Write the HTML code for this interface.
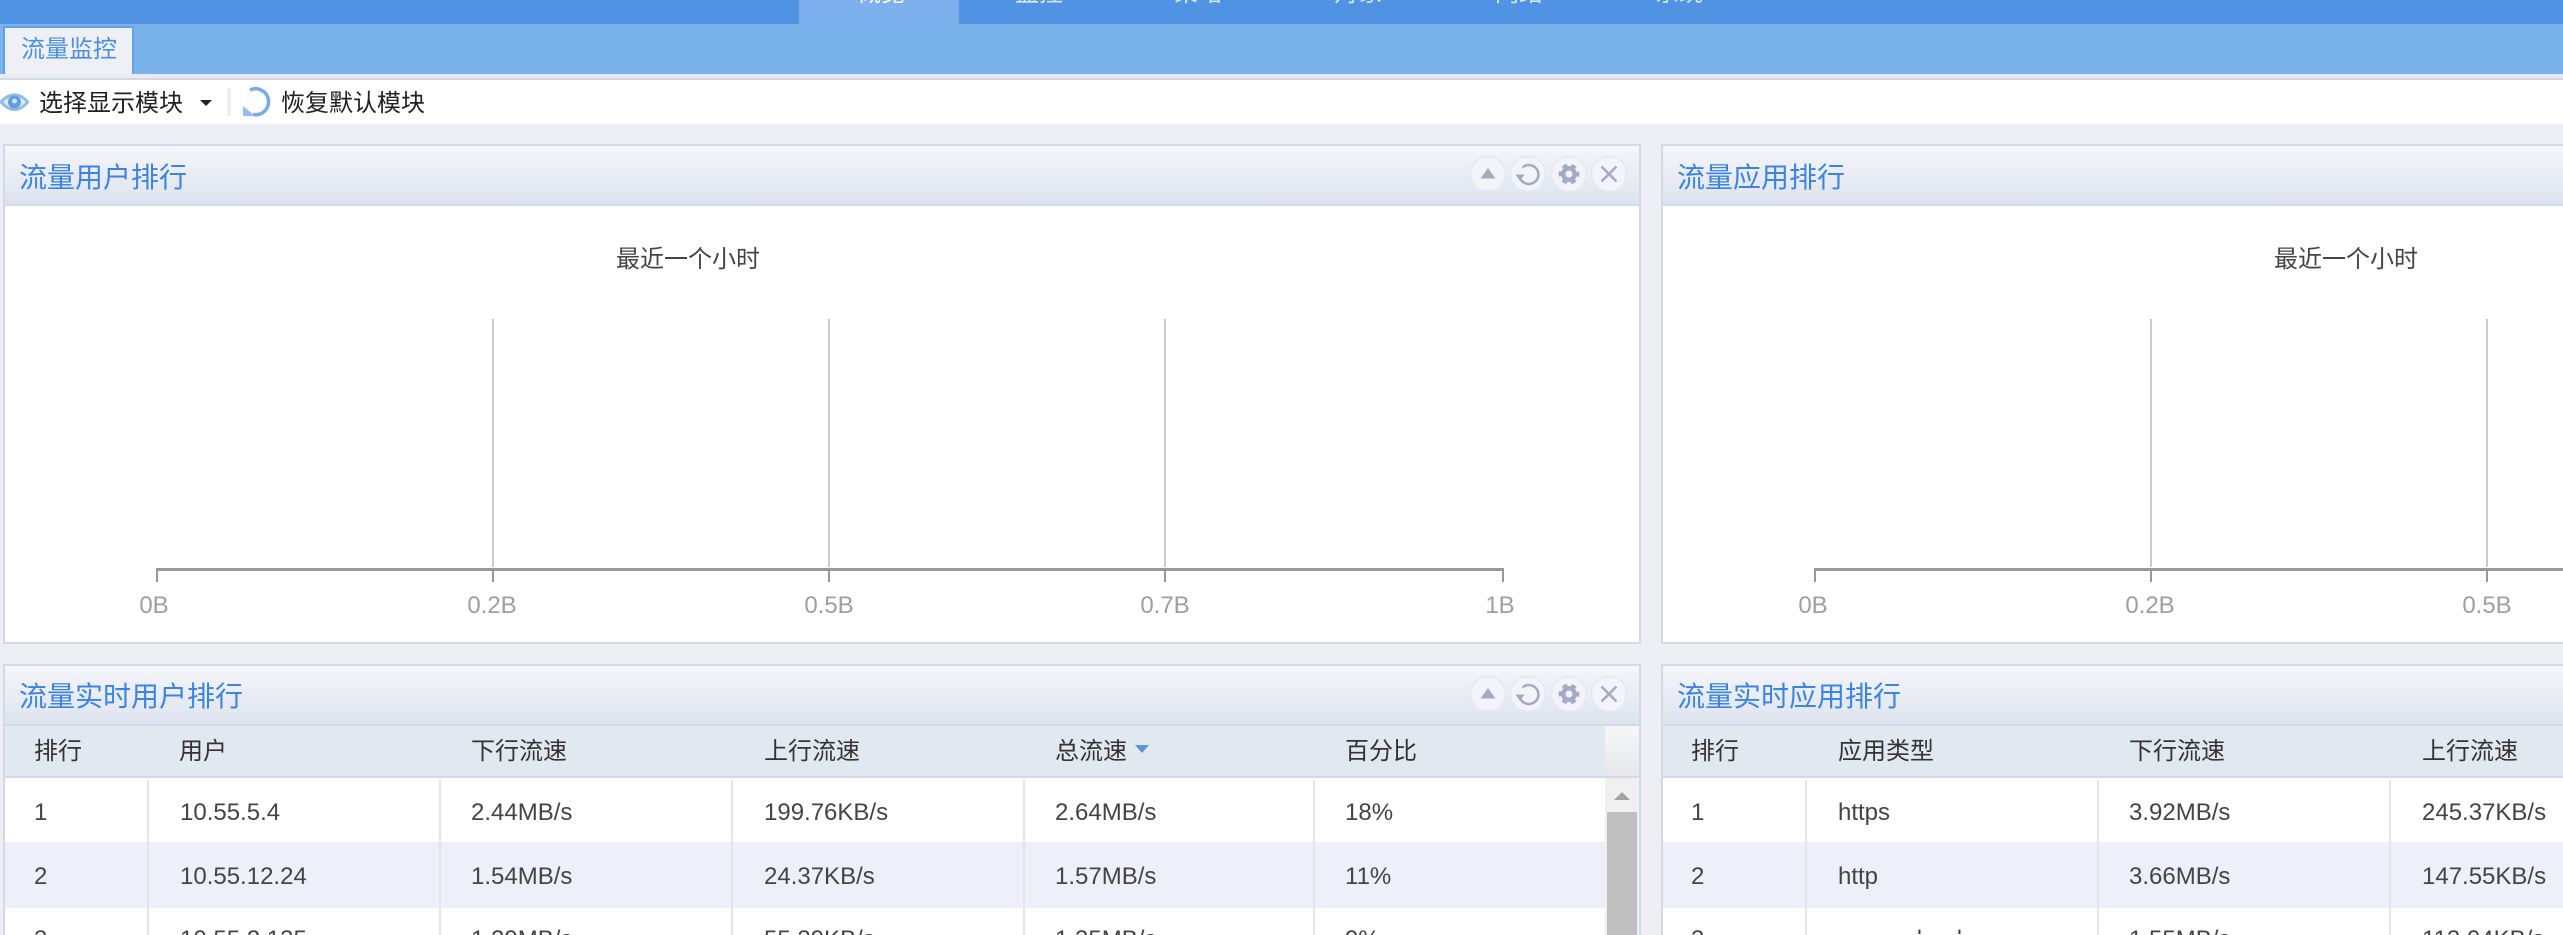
<!DOCTYPE html>
<html lang="zh">
<head>
<meta charset="utf-8">
<title>流量监控</title>
<style>
html,body{margin:0;padding:0;background:#edeff4;width:2563px;height:935px;overflow:hidden;}
#wrap{position:relative;width:2563px;height:935px;overflow:hidden;font-family:"Liberation Sans","Noto Sans CJK SC",sans-serif;font-size:24px;color:#333;background:#edeff4;}
.a{position:absolute;}
.t{position:absolute;line-height:32px;height:32px;white-space:nowrap;}
.c{transform:translateX(-50%);}
.nav{color:#d6e5f8;top:-22px;}
.title{color:#3c84e2;font-size:28px;}
.hd{height:62px;top:0;background:linear-gradient(#f5f6fa 0,#eceef5 40%,#dde3ee 100%);}
.panel{position:absolute;box-sizing:border-box;border:2px solid #d3d9ea;background:#fff;}
.sep{position:absolute;width:2px;background:#e4e5e8;}
.grid{position:absolute;width:2px;top:319px;height:248px;background:#ccc;}
.tick{position:absolute;width:2px;top:569px;height:13px;background:#999;}
.lbl{position:absolute;top:590px;line-height:32px;color:#a09e9c;transform:translateX(-50%);white-space:nowrap;}
.r{color:#444;}
</style>
</head>
<body>
<div id="wrap">
<!-- top nav -->
<div class="a" style="left:0;top:0;width:2563px;height:24px;background:#4f93e2;"></div>
<div class="a" style="left:799px;top:0;width:160px;height:24px;background:#7db0ec;"></div>
<div class="t nav c" style="left:881px;color:#fff;">概览</div>
<div class="t nav c" style="left:1039px;">监控</div>
<div class="t nav c" style="left:1198px;">策略</div>
<div class="t nav c" style="left:1358px;">对象</div>
<div class="t nav c" style="left:1519px;">网络</div>
<div class="t nav c" style="left:1679px;">系统</div>

<!-- sub bar -->
<div class="a" style="left:0;top:24px;width:2563px;height:50px;background:#7ab3eb;"></div>
<div class="a" style="left:3px;top:26px;width:131px;height:48px;box-sizing:border-box;background:#eef0f6;border:2px solid #5fa2e8;border-bottom:none;"></div>
<div class="t" style="left:21px;top:34px;color:#4a8fe2;">流量监控</div>

<!-- toolbar -->
<div class="a" style="left:0;top:74px;width:2563px;height:4px;background:#ebecf3;"></div>
<div class="a" style="left:0;top:78px;width:2563px;height:2px;background:#d3d8e8;"></div>
<div class="a" style="left:0;top:80px;width:2563px;height:44px;background:#fff;"></div>
<svg class="a" style="left:0;top:90px;" width="32" height="24" viewBox="0 0 32 24">
<path d="M-1 12C5 5 10 3.500 14.500 3.500S24 5 29.500 12C24 19 19 21 14.500 21S5 19-1 12Z" fill="#8fbce9"/>
<path d="M3 12C7 8 10 7 14.500 7S22 8 26 12C22 16 19 18 14.500 18S7 16 3 12Z" fill="#dcebf9"/>
<circle cx="14.500" cy="12" r="6.500" fill="#5f9fe0"/>
<circle cx="14.500" cy="11" r="2.500" fill="#cfe3f7"/>
</svg>
<div class="t" style="left:39px;top:88px;color:#222;">选择显示模块</div>
<div class="a" style="left:200px;top:100px;width:0;height:0;border-left:6px solid transparent;border-right:6px solid transparent;border-top:6px solid #222;"></div>
<div class="a" style="left:227px;top:88px;width:4px;height:28px;background:#eeeeee;"></div>
<svg class="a" style="left:242px;top:86px;" width="30" height="31" viewBox="0 0 30 31">
<path d="M8 4A13 13 0 1 1 11 28.500" fill="none" stroke="#72ade6" stroke-width="3.500"/>
<path d="M1 20V30H13Z" fill="#8fbfec"/>
</svg>
<div class="t" style="left:281px;top:88px;color:#222;">恢复默认模块</div>

<!-- panel 1 -->
<div class="panel" style="left:3px;top:144px;width:1638px;height:500px;"></div>
<div class="a hd" style="left:5px;top:146px;width:1634px;height:58px;border-bottom:2px solid #d3d9ea;"></div>
<div class="t title" style="left:19px;top:162px;">流量用户排行</div>
<svg class="a" style="left:1468px;top:154px;" width="164" height="40" viewBox="0 0 164 40">
<g fill="#f3f4f9" stroke="#e5e8f0" stroke-width="1.500">
<circle cx="20" cy="20" r="17.500"/><circle cx="60" cy="20" r="17.500"/><circle cx="101" cy="20" r="17.500"/><circle cx="141" cy="20" r="17.500"/>
</g>
<path d="M12.500 24.500L20 14L27.500 24.500Z" fill="#a3aac6"/>
<path d="M54.500 13.500A9.500 9.500 0 1 1 51.500 22" fill="none" stroke="#a3aac6" stroke-width="2.500"/>
<path d="M47.500 20.500H56.500L52 27Z" fill="#a3aac6"/>
<circle cx="101" cy="20" r="8" fill="#a3aac6"/>
<circle cx="101" cy="20" r="9" fill="none" stroke="#a3aac6" stroke-width="2.800" stroke-dasharray="5 4.425" stroke-dashoffset="2.500"/>
<circle cx="101" cy="20" r="3.500" fill="#f3f4f9"/>
<path d="M133.500 12.500L148.500 27.500M148.500 12.500L133.500 27.500" fill="none" stroke="#a3aac6" stroke-width="2.500"/>
</svg>
<div class="t c" style="left:688px;top:244px;color:#444;">最近一个小时</div>
<div class="grid" style="left:492px;"></div>
<div class="grid" style="left:828px;"></div>
<div class="grid" style="left:1164px;"></div>
<div class="a" style="left:156px;top:568px;width:1348px;height:3px;background:#999;"></div>
<div class="tick" style="left:156px;"></div>
<div class="tick" style="left:492px;"></div>
<div class="tick" style="left:828px;"></div>
<div class="tick" style="left:1164px;"></div>
<div class="tick" style="left:1502px;"></div>
<div class="lbl" style="left:154px;">0B</div>
<div class="lbl" style="left:492px;">0.2B</div>
<div class="lbl" style="left:829px;">0.5B</div>
<div class="lbl" style="left:1165px;">0.7B</div>
<div class="lbl" style="left:1500px;">1B</div>

<!-- panel 2 -->
<div class="panel" style="left:1661px;top:144px;width:1000px;height:500px;"></div>
<div class="a hd" style="left:1663px;top:146px;width:900px;height:58px;border-bottom:2px solid #d3d9ea;"></div>
<div class="t title" style="left:1677px;top:162px;">流量应用排行</div>
<div class="t c" style="left:2346px;top:244px;color:#444;">最近一个小时</div>
<div class="grid" style="left:2150px;"></div>
<div class="grid" style="left:2486px;"></div>
<div class="a" style="left:1814px;top:568px;width:749px;height:3px;background:#999;"></div>
<div class="tick" style="left:1814px;"></div>
<div class="tick" style="left:2150px;"></div>
<div class="tick" style="left:2486px;"></div>
<div class="lbl" style="left:1813px;">0B</div>
<div class="lbl" style="left:2150px;">0.2B</div>
<div class="lbl" style="left:2487px;">0.5B</div>

<!-- panel 3 -->
<div class="panel" style="left:3px;top:664px;width:1638px;height:300px;"></div>
<div class="a hd" style="left:5px;top:666px;width:1634px;height:58px;border-bottom:2px solid #d3d9ea;"></div>
<div class="t title" style="left:19px;top:681px;">流量实时用户排行</div>
<svg class="a" style="left:1468px;top:674px;" width="164" height="40" viewBox="0 0 164 40">
<g fill="#f3f4f9" stroke="#e5e8f0" stroke-width="1.500">
<circle cx="20" cy="20" r="17.500"/><circle cx="60" cy="20" r="17.500"/><circle cx="101" cy="20" r="17.500"/><circle cx="141" cy="20" r="17.500"/>
</g>
<path d="M12.500 24.500L20 14L27.500 24.500Z" fill="#a3aac6"/>
<path d="M54.500 13.500A9.500 9.500 0 1 1 51.500 22" fill="none" stroke="#a3aac6" stroke-width="2.500"/>
<path d="M47.500 20.500H56.500L52 27Z" fill="#a3aac6"/>
<circle cx="101" cy="20" r="8" fill="#a3aac6"/>
<circle cx="101" cy="20" r="9" fill="none" stroke="#a3aac6" stroke-width="2.800" stroke-dasharray="5 4.425" stroke-dashoffset="2.500"/>
<circle cx="101" cy="20" r="3.500" fill="#f3f4f9"/>
<path d="M133.500 12.500L148.500 27.500M148.500 12.500L133.500 27.500" fill="none" stroke="#a3aac6" stroke-width="2.500"/>
</svg>
<div class="a" style="left:5px;top:726px;width:1634px;height:50px;background:#e2e8f0;"></div>
<div class="a" style="left:5px;top:776px;width:1634px;height:2px;background:#d3d9ea;"></div>
<div class="a" style="left:1605px;top:726px;width:34px;height:50px;background:linear-gradient(#f7f7f7,#e6e7ea);"></div>
<div class="t" style="left:34px;top:736px;">排行</div>
<div class="t" style="left:179px;top:736px;">用户</div>
<div class="t" style="left:471px;top:736px;">下行流速</div>
<div class="t" style="left:764px;top:736px;">上行流速</div>
<div class="t" style="left:1055px;top:736px;">总流速</div>
<div class="a" style="left:1135px;top:745px;width:0;height:0;border-left:7.500px solid transparent;border-right:7.500px solid transparent;border-top:8px solid #5f94da;"></div>
<div class="t" style="left:1345px;top:736px;">百分比</div>

<div class="a" style="left:5px;top:842px;width:1600px;height:66px;background:#edf0f8;border-top:2px solid #eeeff2;border-bottom:2px solid #eeeff2;box-sizing:border-box;"></div>
<div class="sep" style="left:147px;top:780px;height:155px;"></div>
<div class="sep" style="left:439px;top:780px;height:155px;"></div>
<div class="sep" style="left:731px;top:780px;height:155px;"></div>
<div class="sep" style="left:1023px;top:780px;height:155px;"></div>
<div class="sep" style="left:1313px;top:780px;height:155px;"></div>

<div class="a" style="left:1605px;top:778px;width:34px;height:157px;background:#f0f0f0;"></div>
<div class="a" style="left:1614px;top:792px;width:0;height:0;border-left:8px solid transparent;border-right:8px solid transparent;border-bottom:8px solid #a3a3a3;"></div>
<div class="a" style="left:1607px;top:812px;width:30px;height:123px;background:#bfbfbf;"></div>

<div class="t r" style="left:34px;top:797px;">1</div>
<div class="t r" style="left:180px;top:797px;">10.55.5.4</div>
<div class="t r" style="left:471px;top:797px;">2.44MB/s</div>
<div class="t r" style="left:764px;top:797px;">199.76KB/s</div>
<div class="t r" style="left:1055px;top:797px;">2.64MB/s</div>
<div class="t r" style="left:1345px;top:797px;">18%</div>

<div class="t r" style="left:34px;top:861px;">2</div>
<div class="t r" style="left:180px;top:861px;">10.55.12.24</div>
<div class="t r" style="left:471px;top:861px;">1.54MB/s</div>
<div class="t r" style="left:764px;top:861px;">24.37KB/s</div>
<div class="t r" style="left:1055px;top:861px;">1.57MB/s</div>
<div class="t r" style="left:1345px;top:861px;">11%</div>

<div class="t r" style="left:34px;top:924px;">3</div>
<div class="t r" style="left:180px;top:924px;">10.55.2.135</div>
<div class="t r" style="left:471px;top:924px;">1.29MB/s</div>
<div class="t r" style="left:764px;top:924px;">55.39KB/s</div>
<div class="t r" style="left:1055px;top:924px;">1.35MB/s</div>
<div class="t r" style="left:1345px;top:924px;">9%</div>

<!-- panel 4 -->
<div class="panel" style="left:1661px;top:664px;width:1000px;height:300px;"></div>
<div class="a hd" style="left:1663px;top:666px;width:900px;height:58px;border-bottom:2px solid #d3d9ea;"></div>
<div class="t title" style="left:1677px;top:681px;">流量实时应用排行</div>
<div class="a" style="left:1663px;top:726px;width:900px;height:50px;background:#e2e8f0;"></div>
<div class="a" style="left:1663px;top:776px;width:900px;height:2px;background:#d3d9ea;"></div>
<div class="t" style="left:1691px;top:736px;">排行</div>
<div class="t" style="left:1838px;top:736px;">应用类型</div>
<div class="t" style="left:2129px;top:736px;">下行流速</div>
<div class="t" style="left:2422px;top:736px;">上行流速</div>

<div class="a" style="left:1663px;top:842px;width:900px;height:66px;background:#edf0f8;border-top:2px solid #eeeff2;border-bottom:2px solid #eeeff2;box-sizing:border-box;"></div>
<div class="sep" style="left:1805px;top:780px;height:155px;"></div>
<div class="sep" style="left:2097px;top:780px;height:155px;"></div>
<div class="sep" style="left:2389px;top:780px;height:155px;"></div>

<div class="t r" style="left:1691px;top:797px;">1</div>
<div class="t r" style="left:1838px;top:797px;">https</div>
<div class="t r" style="left:2129px;top:797px;">3.92MB/s</div>
<div class="t r" style="left:2422px;top:797px;">245.37KB/s</div>

<div class="t r" style="left:1691px;top:861px;">2</div>
<div class="t r" style="left:1838px;top:861px;">http</div>
<div class="t r" style="left:2129px;top:861px;">3.66MB/s</div>
<div class="t r" style="left:2422px;top:861px;">147.55KB/s</div>

<div class="t r" style="left:1691px;top:924px;">3</div>
<div class="t r" style="left:1838px;top:924px;clip-path:inset(0 0 22px 0);">anaconbook</div>
<div class="t r" style="left:2129px;top:924px;">1.55MB/s</div>
<div class="t r" style="left:2422px;top:924px;">113.04KB/s</div>
</div>
</body>
</html>
